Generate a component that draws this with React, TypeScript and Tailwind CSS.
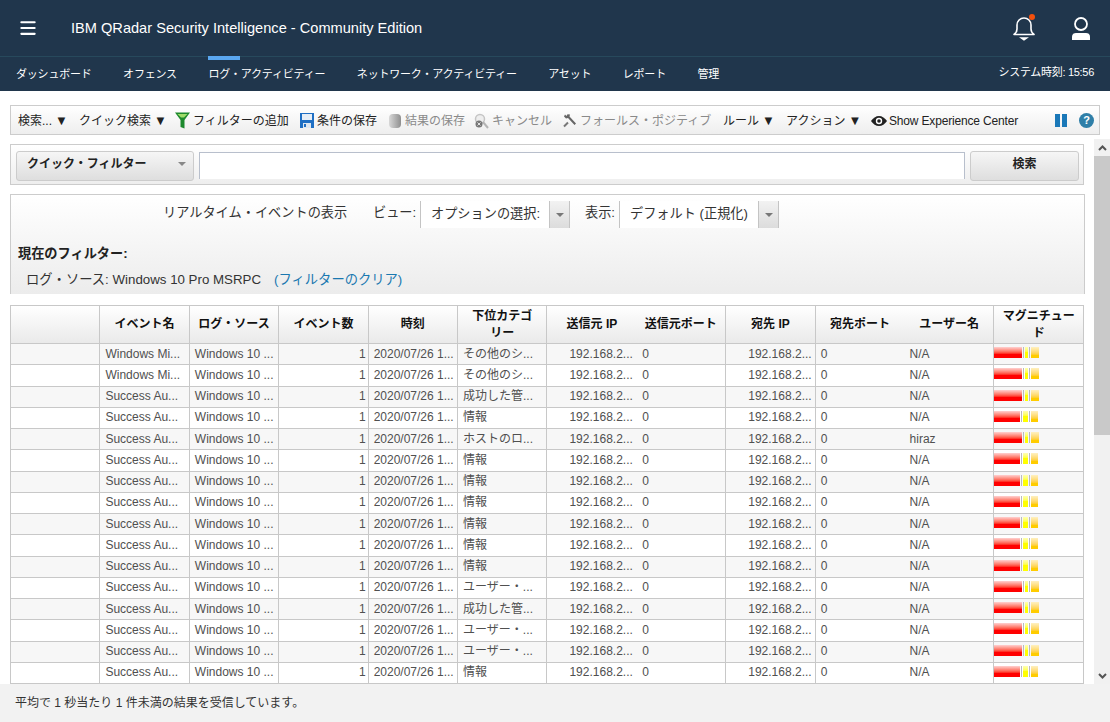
import { Menu } from "lucide-react"

const font = "font-['Liberation_Sans','Noto_Sans_CJK_JP',sans-serif]"

const navItems = ["ダッシュボード", "オフェンス", "ログ・アクティビティー", "ネットワーク・アクティビティー", "アセット", "レポート", "管理"]

interface Row {
  name: string
  category: string
  user?: string
  short?: boolean
}

const WIN = "Windows Mi..."
const AUTH = "Success Au..."

const rows: Row[] = [
  { name: WIN, category: "その他のシ..." },
  { name: WIN, category: "その他のシ..." },
  { name: AUTH, category: "成功した管..." },
  { name: AUTH, category: "情報", short: true },
  { name: AUTH, category: "ホストのロ...", user: "hiraz" },
  { name: AUTH, category: "情報", short: true },
  { name: AUTH, category: "情報", short: true },
  { name: AUTH, category: "情報", short: true },
  { name: AUTH, category: "情報", short: true },
  { name: AUTH, category: "情報", short: true },
  { name: AUTH, category: "情報", short: true },
  { name: AUTH, category: "ユーザー・..." },
  { name: AUTH, category: "成功した管..." },
  { name: AUTH, category: "ユーザー・..." },
  { name: AUTH, category: "ユーザー・..." },
  { name: AUTH, category: "情報", short: true },
]

function BellIcon() {
  return (
    <svg width="24" height="26" viewBox="0 0 24 26" fill="none" stroke="white" strokeWidth="1.6">
      <path d="M2 19.5c2-1.5 3-3 3-5.5V10a7 7 0 0 1 14 0v4c0 2.5 1 4 3 5.5z" strokeLinejoin="round" />
      <path d="M9.5 23h5l-2.5 1.8z" fill="white" />
    </svg>
  )
}

function UserIcon() {
  return (
    <svg width="20" height="24" viewBox="0 0 20 24" fill="none">
      <circle cx="10" cy="7" r="6" stroke="white" strokeWidth="1.8" />
      <path d="M1 23v-3.5C1 17 3 16 5 16h10c2 0 4 1 4 3.5V23z" fill="white" />
    </svg>
  )
}

function FunnelIcon() {
  return (
    <svg width="15" height="17" viewBox="0 0 15 17">
      <path d="M0 0.5h15L9.5 8v8.5l-4-1.5V8z" fill="#1e8a2e" />
      <path d="M2.5 2h10L9 5.5H6z" fill="#9fdc6a" />
    </svg>
  )
}

function SaveIcon() {
  return (
    <svg width="14" height="15" viewBox="0 0 14 15">
      <rect width="14" height="15" fill="#1f6fc4" />
      <rect x="2" y="1" width="10" height="6" fill="#e6eef7" />
      <rect x="3" y="10" width="8" height="5" fill="#dfe7f0" />
      <rect x="4" y="11" width="2" height="3" fill="#1f6fc4" />
    </svg>
  )
}

function DbIcon() {
  return (
    <svg width="14" height="16" viewBox="0 0 14 16">
      <defs>
        <linearGradient id="db" x1="0" x2="1" y1="0" y2="0">
          <stop offset="0" stopColor="#d8d8d8" />
          <stop offset="1" stopColor="#8f8f8f" />
        </linearGradient>
      </defs>
      <rect x="1" y="1" width="12" height="14" rx="4" fill="url(#db)" />
    </svg>
  )
}

function CancelIcon() {
  return (
    <svg width="15" height="16" viewBox="0 0 15 16" fill="none">
      <circle cx="6" cy="6" r="4.5" stroke="#c5c5c5" strokeWidth="1.5" fill="#eee" />
      <path d="M9 9l5 6" stroke="#b5b5b5" strokeWidth="2" />
      <circle cx="5" cy="11" r="3.5" fill="#777" />
      <path d="M3.5 9.5l3 3M6.5 9.5l-3 3" stroke="white" strokeWidth="0.8" />
    </svg>
  )
}

function WrenchIcon() {
  return (
    <svg width="14" height="14" viewBox="0 0 14 14" fill="none">
      <path d="M2 0.5L1 2.5l2 2 2-.5 6.5 7 1.5-1.5-6.5-7 .5-2L4.5.2 3.5 2z" fill="#666" />
      <path d="M1 12.5l4-4" stroke="#777" strokeWidth="2" />
    </svg>
  )
}

function EyeIcon() {
  return (
    <svg width="16" height="10" viewBox="0 0 16 10">
      <path d="M0 5c2-3 5-5 8-5s6 2 8 5c-2 3-5 5-8 5S2 8 0 5z" fill="#222" />
      <circle cx="8" cy="5" r="3.2" fill="white" />
      <circle cx="8" cy="5" r="1.8" fill="#222" />
    </svg>
  )
}

function ToolItem({ label, icon, muted, arrow, width }: { label: string; icon?: React.ReactNode; muted?: boolean; arrow?: boolean; width: string }) {
  return (
    <span className={`flex shrink-0 items-center gap-[3px] whitespace-nowrap ${width} ${muted ? "text-[#8a8a8a]" : "text-[#222]"}`}>
      {icon}
      <span>{label}</span>
      {arrow && <span className="text-[13px] leading-none">▼</span>}
    </span>
  )
}

function SelectBox({ value, width }: { value: string; width: string }) {
  return (
    <div className={`flex h-[27px] ${width} border-l border-[#c4c4c4] bg-white`}>
      <span className="flex-1 pl-[10px] pt-[3px] text-[13.2px] text-[#333] whitespace-nowrap">{value}</span>
      <span className="flex w-[21px] items-center justify-center border-x border-[#c4c4c4] bg-gradient-to-b from-[#f2f2f2] to-[#dcdcdc]">
        <span className="h-0 w-0 border-x-[4px] border-t-[4px] border-x-transparent border-t-[#777]" />
      </span>
    </div>
  )
}

function MagnitudeBar({ short }: { short?: boolean }) {
  return (
    <div className="flex h-[11px]">
      <span className={`${short ? "w-[26px]" : "w-[28px]"} bg-gradient-to-b from-[#ffd0d0] via-[#ff0000] via-65% to-[#ff0000]`} />
      <span className="ml-[1px] w-[1px] bg-[#bbb]" />
      <span className={`${short ? "w-[5px]" : "w-[3px]"} ml-[1px] bg-gradient-to-b from-[#ffffb0] via-[#ffff00] via-50% to-[#ffff00]`} />
      <span className="ml-[1px] w-[1px] bg-[#bbb]" />
      <span className={`${short ? "w-[7px]" : "w-[8px]"} ml-[1px] bg-gradient-to-b from-[#fff0c0] via-[#ffcc00] via-75% to-[#ffcc00]`} />
    </div>
  )
}

const th = "border-b border-[#c8c8c8] px-[4px] text-center align-middle text-[12px] leading-[17px] font-bold text-[#111]"
const td = "h-[21.25px] border-b border-[#c8c8c8] p-0 pb-[1px] text-[12px] leading-[14px] text-[#505050] whitespace-nowrap overflow-hidden"
const divider = "border-r border-[#c8c8c8]"

export default function App() {
  return (
    <div className={`${font} flex h-[722px] w-[1110px] flex-col overflow-hidden bg-white`}>
      {/* header */}
      <header className="flex h-[57px] shrink-0 items-center border-b border-[#27495c] bg-[#20364c] pl-[18px] pr-[18px] text-white">
        <Menu size={20} strokeWidth={2.5} />
        <span className="ml-[33px] mt-[1px] text-[14.6px]">IBM QRadar Security Intelligence - Community Edition</span>
        <div className="relative ml-auto mr-[35px]">
          <BellIcon />
          <span className="absolute -top-[1px] right-[1px] h-[6px] w-[6px] rounded-full bg-[#f4500c]" />
        </div>
        <div className="mt-[1px] mr-[1px]">
          <UserIcon />
        </div>
      </header>
      <nav className="flex h-[34px] shrink-0 items-center bg-[#20364c] pl-[16px] pr-[16px] text-[11px] tracking-[-0.2px] text-white">
        <div className="mt-[1px] flex gap-[31.5px]">
          {navItems.map((item, i) => (
            <span key={item} className="relative whitespace-nowrap">
              {i === 2 && <span className="absolute -top-[10px] left-0 h-[4px] w-[32px] bg-[#5aa7f0]" />}
              {item}
            </span>
          ))}
        </div>
        <span className="ml-auto mb-[3px] text-[11px] tracking-[-0.3px] whitespace-nowrap">システム時刻: 15:56</span>
      </nav>

      <main className="flex min-h-0 flex-1 flex-col pl-[10px] pt-[14px]">
        {/* toolbar */}
        <div className="mr-[10px] flex h-[30px] shrink-0 items-center border-x border-y border-[#ccc] bg-gradient-to-b from-white to-[#eee] pl-[7px] pr-[5px] pt-[1px] text-[12px]">
          <ToolItem label="検索..." arrow width="w-[61px]" />
          <ToolItem label="クイック検索" arrow width="w-[96px]" />
          <ToolItem label="フィルターの追加" icon={<FunnelIcon />} width="w-[125px]" />
          <ToolItem label="条件の保存" icon={<SaveIcon />} width="w-[88px]" />
          <ToolItem label="結果の保存" icon={<DbIcon />} muted width="w-[86px]" />
          <ToolItem label="キャンセル" icon={<CancelIcon />} muted width="w-[89px]" />
          <ToolItem label="フォールス・ポジティブ" icon={<WrenchIcon />} muted width="w-[160px]" />
          <ToolItem label="ルール" arrow width="w-[63px]" />
          <ToolItem label="アクション" arrow width="w-[85px]" />
          <span className="flex shrink-0 items-center gap-[2px] tracking-[-0.17px] whitespace-nowrap text-[#222]">
            <EyeIcon />
            Show Experience Center
          </span>
          <div className="ml-auto flex items-center gap-[12px]">
            <span className="flex gap-[2px]">
              <span className="h-[13px] w-[5px] bg-[#1a78b8]" />
              <span className="h-[13px] w-[5px] bg-[#1a78b8]" />
            </span>
            <span className="flex h-[15px] w-[15px] items-center justify-center rounded-full bg-[#2f7fa8] text-[11px] font-bold text-white">?</span>
          </div>
        </div>

        <div className="flex min-h-0 flex-1 pt-[4px]">
          <div className="flex min-w-0 flex-1 flex-col">
            {/* quick filter */}
            <div className="mt-[5px] flex h-[41px] w-[1074px] shrink-0 items-start gap-[5px] border border-[#ccc] bg-gradient-to-b from-white to-[#eee] pl-[5px] pt-[6px]">
              <div className="flex h-[30px] w-[178px] items-center justify-between rounded-[3px] border border-[#ccc] bg-gradient-to-b from-[#f6f6f6] to-[#dedede] pb-[4px] pl-[10px] pr-[7px] text-[12px] font-bold text-[#222]">
                <span>クイック・フィルター</span>
                <span className="h-0 w-0 border-x-[4px] border-t-[4px] border-x-transparent border-t-[#888]" />
              </div>
              <div className="mt-[1px] h-[27px] w-[766px] border-t border-x border-[#b8bfcc] bg-white" />
              <div className="flex h-[30px] w-[109px] items-center justify-center rounded-[3px] border border-[#ccc] bg-gradient-to-b from-[#f6f6f6] to-[#dedede] pb-[4px] text-[12px] font-bold text-[#222]">検索</div>
            </div>

            {/* view options */}
            <div className="mt-[9px] h-[100px] w-[1075px] shrink-0 border-x border-t border-[#ccc] bg-gradient-to-b from-white to-[#ececec] pl-[7px]">
              <div className="flex items-start pt-[6px] text-[13.2px] text-[#333]">
                <span className="ml-[145px] mt-[2px] w-[210px] whitespace-nowrap">リアルタイム・イベントの表示</span>
                <span className="mt-[2px] w-[47px] whitespace-nowrap">ビュー:</span>
                <SelectBox value="オプションの選択:" width="w-[150px]" />
                <span className="ml-[15px] mt-[2px] w-[34px] whitespace-nowrap">表示:</span>
                <SelectBox value="デフォルト (正規化)" width="w-[160px]" />
              </div>
              <p className="mt-[16px] text-[13.2px] font-bold text-[#222]">現在のフィルター:</p>
              <p className="mt-[6px] ml-[8px] text-[13.3px] text-[#333]">
                ログ・ソース: Windows 10 Pro MSRPC
                <span className="ml-[13px] text-[#1a78b0]">(フィルターのクリア)</span>
              </p>
            </div>

            {/* events table */}
            <table className="mt-[11px] w-[1074px] table-fixed border-collapse border border-[#c8c8c8]">
              <thead>
                <tr className="h-[38px] bg-gradient-to-b from-white to-[#e9e9e9]">
                  <th className={`${th} ${divider}`} />
                  <th className={`${th} ${divider}`}>イベント名</th>
                  <th className={`${th} ${divider}`}>ログ・ソース</th>
                  <th className={`${th} ${divider}`}>イベント数</th>
                  <th className={`${th} ${divider}`}>時刻</th>
                  <th className={`${th} ${divider}`}>下位カテゴ<br />リー</th>
                  <th className={th}>送信元 IP</th>
                  <th className={`${th} ${divider}`}>送信元ポート</th>
                  <th className={`${th} ${divider}`}>宛先 IP</th>
                  <th className={th}>宛先ポート</th>
                  <th className={`${th} ${divider}`}>ユーザー名</th>
                  <th className={th}>マグニチュー<br />ド</th>
                </tr>
              </thead>
              <tbody>
                {rows.map((row, i) => (
                  <tr key={i} className={i % 2 === 0 ? "bg-[#f7f7f7]" : "bg-white"}>
                    <td className={`${td} ${divider}`} />
                    <td className={`${td} ${divider} pl-[5px]`}>{row.name}</td>
                    <td className={`${td} ${divider} pl-[5px]`}>Windows 10 ...</td>
                    <td className={`${td} ${divider} pr-[2px] text-right`}>1</td>
                    <td className={`${td} ${divider} pl-[5px]`}>2020/07/26 1...</td>
                    <td className={`${td} ${divider} pl-[5px]`}>{row.category}</td>
                    <td className={`${td} pl-[22px]`}>192.168.2...</td>
                    <td className={`${td} ${divider} pl-[6px]`}>0</td>
                    <td className={`${td} ${divider} pl-[22px]`}>192.168.2...</td>
                    <td className={`${td} pl-[5px]`}>0</td>
                    <td className={`${td} ${divider} pl-[5px]`}>{row.user ?? "N/A"}</td>
                    <td className={`${td} pt-[3px] align-top`}>
                      <MagnitudeBar short={row.short} />
                    </td>
                  </tr>
                ))}
              </tbody>
            </table>
          </div>

          {/* scrollbar */}
          <div className="flex w-[16px] shrink-0 flex-col bg-[#f1f1f1]">
            <div className="flex h-[17px] items-center justify-center">
              <svg width="9" height="6" viewBox="0 0 9 6" fill="none" stroke="#555" strokeWidth="2"><path d="M1 5l3.5-3.5L8 5" /></svg>
            </div>
            <div className="h-[279px] bg-[#c9c9c9]" />
            <div className="flex-1" />
            <div className="flex h-[17px] items-center justify-center">
              <svg width="9" height="6" viewBox="0 0 9 6" fill="none" stroke="#555" strokeWidth="2"><path d="M1 1l3.5 3.5L8 1" /></svg>
            </div>
          </div>
        </div>

        {/* status bar */}
        <footer className="-ml-[10px] flex h-[38px] shrink-0 items-center bg-[#f2f2f2] pl-[15px] text-[12px] text-[#333]">
          平均で 1 秒当たり 1 件未満の結果を受信しています。
        </footer>
      </main>
    </div>
  )
}
